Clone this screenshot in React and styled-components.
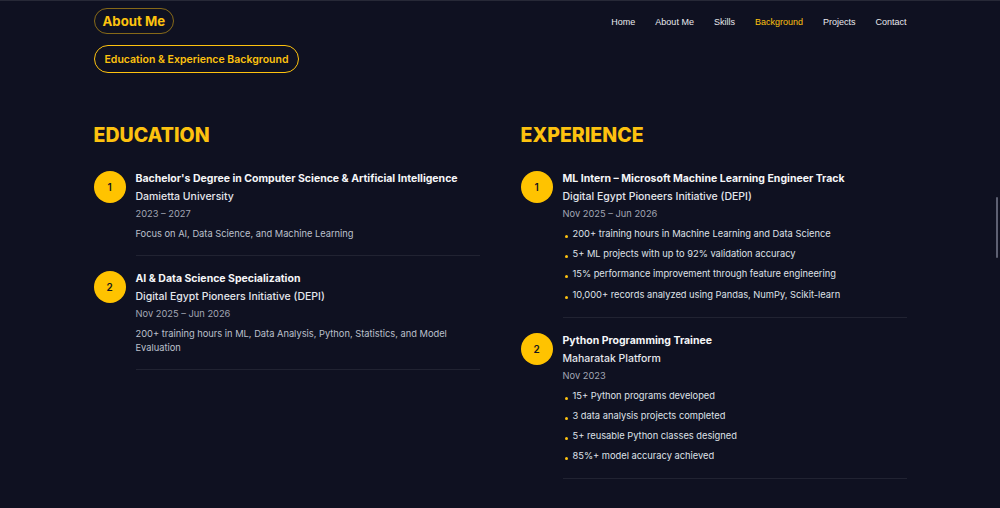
import styled, { createGlobalStyle } from "styled-components";

const GOLD = "#fdc20f";

const GlobalStyle = createGlobalStyle`
  html, body {
    margin: 0;
    padding: 0;
    overflow: hidden;
    background: #0f1121;
  }
  * {
    box-sizing: border-box;
  }
`;

const education = [
  {
    title: "Bachelor's Degree in Computer Science & Artificial Intelligence",
    org: "Damietta University",
    date: "2023 – 2027",
    text: "Focus on AI, Data Science, and Machine Learning",
  },
  {
    title: "AI & Data Science Specialization",
    org: "Digital Egypt Pioneers Initiative (DEPI)",
    date: "Nov 2025 – Jun 2026",
    text: "200+ training hours in ML, Data Analysis, Python, Statistics, and Model Evaluation",
  },
];

const experience = [
  {
    title: "ML Intern – Microsoft Machine Learning Engineer Track",
    org: "Digital Egypt Pioneers Initiative (DEPI)",
    date: "Nov 2025 – Jun 2026",
    points: [
      "200+ training hours in Machine Learning and Data Science",
      "5+ ML projects with up to 92% validation accuracy",
      "15% performance improvement through feature engineering",
      "10,000+ records analyzed using Pandas, NumPy, Scikit-learn",
    ],
  },
  {
    title: "Python Programming Trainee",
    org: "Maharatak Platform",
    date: "Nov 2023",
    points: [
      "15+ Python programs developed",
      "3 data analysis projects completed",
      "5+ reusable Python classes designed",
      "85%+ model accuracy achieved",
    ],
  },
];

const links = ["Home", "About Me", "Skills", "Background", "Projects", "Contact"];

function Entry({ index, item }) {
  return (
    <Item>
      <Badge>{index + 1}</Badge>
      <ItemBody>
        <ItemTitle>{item.title}</ItemTitle>
        <ItemOrg>{item.org}</ItemOrg>
        <ItemDate>{item.date}</ItemDate>
        {item.text && <ItemText>{item.text}</ItemText>}
        {item.points && (
          <Points>
            {item.points.map((p) => (
              <Point key={p}>{p}</Point>
            ))}
          </Points>
        )}
      </ItemBody>
    </Item>
  );
}

export default function App() {
  return (
    <Page>
      <GlobalStyle />
      <Container>
        <Header>
          <Brand>About Me</Brand>
          <Nav>
            {links.map((l) => (
              <NavLink key={l} $active={l === "Background"}>
                {l}
              </NavLink>
            ))}
          </Nav>
        </Header>
        <SectionTag>Education &amp; Experience Background</SectionTag>
        <Columns>
          <Column>
            <Heading>EDUCATION</Heading>
            {education.map((item, i) => (
              <Entry key={item.title} index={i} item={item} />
            ))}
          </Column>
          <Column>
            <Heading>EXPERIENCE</Heading>
            {experience.map((item, i) => (
              <Entry key={item.title} index={i} item={item} />
            ))}
          </Column>
        </Columns>
      </Container>
      <ScrollThumb />
    </Page>
  );
}

const Page = styled.div`
  min-height: 508px;
  background: #0f1121;
  border-top: 1px solid #272937;
  font-family: Inter, "Liberation Sans", sans-serif;
  color: #f3f4f6;
`;

const Container = styled.div`
  width: 813px;
  margin: 0 auto;
  padding-top: 7px;
`;

const Header = styled.header`
  display: flex;
  align-items: center;
  justify-content: space-between;
`;

const Brand = styled.div`
  height: 26px;
  padding: 0 8px;
  display: flex;
  align-items: center;
  border: 1px solid rgba(253, 194, 15, 0.5);
  border-radius: 14px;
  color: ${GOLD};
  font-size: 13.2px;
  font-weight: 700;
`;

const Nav = styled.nav`
  display: flex;
  gap: 20px;
  padding-top: 1px;
`;

const NavLink = styled.a`
  font-family: "Liberation Sans", Arial, sans-serif;
  font-size: 9px;
  color: ${(p) => (p.$active ? GOLD : "#e8e9ee")};
  cursor: pointer;
`;

const SectionTag = styled.div`
  display: inline-flex;
  align-items: center;
  height: 28px;
  margin-top: 11px;
  padding: 0 10px;
  border: 1.5px solid ${GOLD};
  border-radius: 15px;
  color: ${GOLD};
  font-size: 10.5px;
  font-weight: 600;
`;

const Columns = styled.div`
  display: grid;
  grid-template-columns: 386px 386px;
  column-gap: 41px;
  margin-top: 50px;
`;

const Column = styled.section`
  display: flex;
  flex-direction: column;
`;

const Heading = styled.h2`
  margin: 0 0 24px;
  font-size: 19.5px;
  line-height: 24px;
  font-weight: 800;
  color: ${GOLD};
`;

const Item = styled.div`
  display: flex;
  gap: 10px;
  & + & {
    margin-top: 15px;
  }
`;

const Badge = styled.div`
  flex-shrink: 0;
  width: 32px;
  height: 32px;
  border-radius: 50%;
  background: #ffc300;
  color: #14151f;
  display: flex;
  align-items: center;
  justify-content: center;
  font-size: 10px;
  font-weight: 600;
`;

const ItemBody = styled.div`
  flex: 1;
  padding-bottom: 14px;
  border-bottom: 1px solid rgba(255, 255, 255, 0.08);
`;

const ItemTitle = styled.div`
  font-size: 10.5px;
  line-height: 16px;
  font-weight: 700;
  color: #f5f6f8;
`;

const ItemOrg = styled.div`
  margin-top: 2px;
  font-size: 10.5px;
  line-height: 16px;
  font-weight: 500;
  color: #e4e6ec;
`;

const ItemDate = styled.div`
  margin-top: 1px;
  font-size: 9.3px;
  line-height: 16px;
  color: #a2a6b4;
`;

const ItemText = styled.p`
  margin: 5px 0 0;
  font-size: 9.3px;
  line-height: 14px;
  color: #bcc0cc;
`;

const Points = styled.ul`
  list-style: none;
  margin: 5px 0 1px;
  padding: 0;
  display: flex;
  flex-direction: column;
  gap: 6.2px;
`;

const Point = styled.li`
  position: relative;
  padding-left: 10px;
  font-size: 9.3px;
  line-height: 14px;
  color: #dfe1e8;
  &::before {
    content: "";
    position: absolute;
    left: 2px;
    top: 8px;
    width: 3px;
    height: 3px;
    border-radius: 50%;
    background: ${GOLD};
  }
`;

const ScrollThumb = styled.div`
  position: fixed;
  right: 2px;
  top: 197px;
  width: 2px;
  height: 61px;
  border-radius: 1px;
  background: #5d6072;
`;
